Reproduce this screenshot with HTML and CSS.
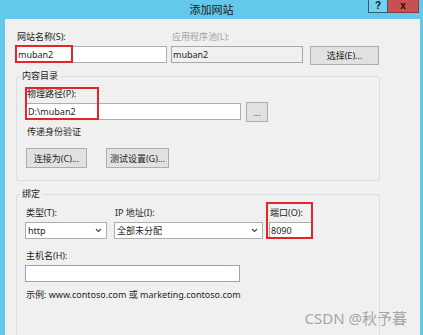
FILE: index.html
```html
<!DOCTYPE html>
<html lang="zh-CN">
<head>
    <meta charset="UTF-8">
    <title>添加网站</title>
    <link rel="stylesheet" href="styles.css">
</head>
<body>
    <div class="window">
        <div class="titlebar">
            <span></span>
            <div class="title">添加网站</div>
            <div class="caption-buttons">
                <div class="caption-help">?</div>
                <div class="caption-close">x</div>
            </div>
        </div>

        <div class="content">
            <div class="row">
                <div class="field field-site">
                    <label>网站名称(S):</label>
                    <input type="text" class="textbox" value="muban2">
                    <span class="mark mark-site"></span>
                </div>
                <div class="field field-pool">
                    <label class="disabled">应用程序池(L):</label>
                    <input type="text" class="textbox textbox-disabled" value="muban2" disabled>
                </div>
                <button class="btn btn-select">选择(E)...</button>
            </div>

            <fieldset class="group group-content">
                <legend>内容目录</legend>
                <div class="field field-path">
                    <label>物理路径(P):</label>
                    <div class="path-row">
                        <input type="text" class="textbox textbox-path" value="D:\muban2">
                        <button class="btn btn-browse">...</button>
                    </div>
                    <span class="mark mark-path"></span>
                </div>
                <div class="note">传递身份验证</div>
                <div class="btn-row">
                    <button class="btn btn-connect">连接为(C)...</button>
                    <button class="btn btn-test">测试设置(G)...</button>
                </div>
            </fieldset>

            <fieldset class="group group-binding">
                <legend>绑定</legend>
                <div class="row">
                    <div class="field field-type">
                        <label>类型(T):</label>
                        <div class="select">
                            <span>http</span>
                            <svg width="7" height="5" viewBox="0 0 7 5"><path d="M1 1 L3.5 3.5 L6 1" fill="none" stroke="#444" stroke-width="1.1"/></svg>
                        </div>
                    </div>
                    <div class="field field-ip">
                        <label>IP 地址(I):</label>
                        <div class="select">
                            <span>全部未分配</span>
                            <svg width="7" height="5" viewBox="0 0 7 5"><path d="M1 1 L3.5 3.5 L6 1" fill="none" stroke="#444" stroke-width="1.1"/></svg>
                        </div>
                    </div>
                    <div class="field field-port">
                        <label>端口(O):</label>
                        <input type="text" class="textbox" value="8090">
                        <span class="mark mark-port"></span>
                    </div>
                </div>
                <div class="field field-host">
                    <label>主机名(H):</label>
                    <input type="text" class="textbox textbox-host" value="">
                </div>
                <div class="example">示例: www.contoso.com 或 marketing.contoso.com</div>
            </fieldset>
        </div>
    </div>
    <div class="watermark">CSDN @秋予暮</div>
</body>
</html>
```

FILE: styles.css
```css
body {
    margin: 0;
    background-color: #63c8e9;
    font-family: "Noto Sans", "Noto Sans CJK SC", sans-serif;
    font-size: 9px;
    color: #1e1e1e;
    height: 335px;
    overflow: hidden;
    position: relative;
}
.window {
    height: 335px;
    padding: 0 3px 0 5px;
    box-sizing: border-box;
    display: flex;
    flex-direction: column;
}
.titlebar {
    display: grid;
    grid-template-columns: 1fr auto 1fr;
    height: 19px;
    margin: 0 -3px 0 -5px;
}
.title {
    font-size: 11px;
    line-height: 19px;
    color: #1a1a1a;
}
.caption-buttons {
    justify-self: end;
    align-self: start;
    display: flex;
    margin-right: 4px;
}
.caption-help, .caption-close {
    height: 13px;
    box-sizing: border-box;
    text-align: center;
    font-family: "Liberation Sans", sans-serif;
    font-weight: bold;
    font-size: 10px;
    line-height: 11px;
    color: #111;
}
.caption-help {
    width: 20px;
    background-color: #74d2ef;
    border: 1px solid #2d5f7c;
    border-top: none;
}
.caption-close {
    width: 31px;
    background-color: #c75050;
    border: 1px solid #8c3a3a;
    border-top: none;
    border-left: none;
}
.content {
    flex: 1;
    background-color: #f0f0f0;
    padding: 12px 0 0 11px;
    overflow: hidden;
}
.row {
    display: flex;
    align-items: flex-start;
}
.field {
    position: relative;
}
.field label {
    display: block;
    line-height: 12px;
    margin-bottom: 3px;
    padding-left: 1px;
}
label.disabled {
    color: #a3a3a3;
}
.textbox {
    display: block;
    width: 100%;
    height: 17px;
    box-sizing: border-box;
    border: 1px solid #abadb3;
    background-color: white;
    font-family: inherit;
    font-size: 9px;
    color: #1e1e1e;
    padding: 0 1px;
    margin: 0;
}
.textbox-disabled {
    background-color: #f0f0f0;
    border-color: #a8a8a8;
}
.field-site {
    width: 151px;
    margin-right: 4px;
}
.field-pool {
    width: 132px;
}
.btn {
    height: 20px;
    box-sizing: border-box;
    background-color: #e1e1e1;
    border: 1px solid #adadad;
    font-family: inherit;
    font-size: 9px;
    color: #1e1e1e;
    padding: 0;
    margin: 0;
}
.btn-select {
    width: 69px;
    height: 19px;
    margin-left: 7px;
    margin-top: 15px;
}
.group {
    width: 364px;
    box-sizing: border-box;
    margin: 5px 0 0 0;
    border: 1px solid #d7dde2;
    border-radius: 3px;
    padding: 6px 0 12px 9px;
}
.group legend {
    padding: 0 2px;
    margin-left: -6px;
    line-height: 12px;
}
.path-row {
    display: flex;
    align-items: flex-start;
}
.textbox-path {
    width: 215px;
}
.btn-browse {
    width: 22px;
    margin-left: 5px;
    margin-top: -1px;
    color: #33507a;
}
.note {
    margin-top: 4px;
    line-height: 12px;
    padding-left: 1px;
}
.btn-row {
    display: flex;
    gap: 19px;
    margin-top: 10px;
}
.btn-connect {
    width: 61px;
}
.btn-test {
    width: 63px;
}
.group-binding {
    margin-top: 7px;
    padding: 7px 0 60px 8px;
}
.group-binding legend {
    margin-left: -5px;
}
.field-type {
    width: 82px;
    margin-right: 7px;
}
.field-ip {
    width: 149px;
    margin-right: 6px;
}
.field-port {
    width: 43px;
}
.select {
    display: flex;
    justify-content: space-between;
    align-items: center;
    height: 17px;
    box-sizing: border-box;
    border: 1px solid #abadb3;
    background-color: white;
    padding: 0 4px 0 2px;
}
.field-host {
    margin-top: 11px;
}
.textbox-host {
    width: 215px;
    border-color: #8ea7c4;
}
.example {
    margin-top: 7px;
    line-height: 12px;
    padding-left: 1px;
}
.mark {
    position: absolute;
    border: 2px solid #e8232a;
    box-sizing: border-box;
}
.mark-site {
    left: -1px;
    top: 14px;
    width: 58px;
    height: 18px;
}
.mark-path {
    left: -1px;
    top: -1px;
    width: 74px;
    height: 33px;
}
.mark-port {
    left: -3px;
    top: -5px;
    width: 47px;
    height: 37px;
}
.watermark {
    position: absolute;
    right: 16px;
    bottom: 9px;
    font-size: 15px;
    line-height: 16px;
    color: #a6a6a6;
}
```
